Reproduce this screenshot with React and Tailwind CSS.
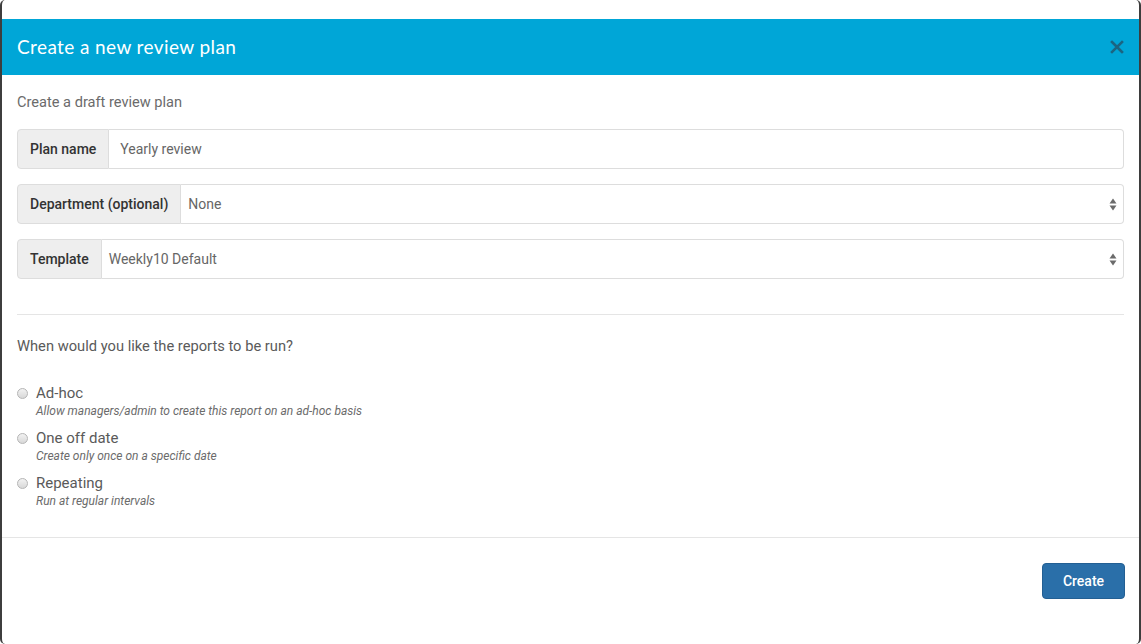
import { useState } from 'react';

const OPTIONS = [
  { value: 'adhoc', label: 'Ad-hoc', hint: 'Allow managers/admin to create this report on an ad-hoc basis' },
  { value: 'once', label: 'One off date', hint: 'Create only once on a specific date' },
  { value: 'repeat', label: 'Repeating', hint: 'Run at regular intervals' },
];

function SelectArrows() {
  return (
    <svg width="8" height="13" viewBox="0 0 8 13" className="shrink-0">
      <path d="M4 0.5 L7.5 5.5 H0.5 Z" fill="#6b6b6b" />
      <path d="M4 12.5 L7.5 7.5 H0.5 Z" fill="#6b6b6b" />
    </svg>
  );
}

function Field({ label, value, select }) {
  return (
    <div className="flex h-10">
      <div className="flex items-center px-[12px] bg-[#eeeeee] border border-[#dddddd] rounded-l-[4px] text-[14px] font-medium text-[#333] whitespace-nowrap">
        {label}
      </div>
      <div className={`flex-1 flex items-center justify-between pr-[6px] border border-l-0 border-[#dddddd] rounded-r-[4px] text-[14px] text-[#666] bg-white ${select ? 'pl-[7px]' : 'pl-[11px]'}`}>
        <span>{value}</span>
        {select && <SelectArrows />}
      </div>
    </div>
  );
}

export default function App() {
  const [run, setRun] = useState('');

  return (
    <div className="h-screen bg-white border-x-2 border-[#3d3d3d] rounded-[5px] overflow-hidden flex flex-col" style={{ fontFamily: 'Roboto, "Noto Sans", sans-serif' }}>
      <div className="h-[19px]" />
      <div className="h-[56px] bg-[#00a6d7] flex items-center justify-between pl-[15px] pr-[15px]">
        <h1 className="text-white text-[19px] tracking-[0.4px]" style={{ fontFamily: 'Lato, "Open Sans", sans-serif' }}>
          Create a new review plan
        </h1>
        <button className="text-[#1b6582]">
          <svg width="14" height="14" viewBox="0 0 14 14">
            <path d="M2 2 L12 12 M12 2 L2 12" stroke="currentColor" strokeWidth="2.6" strokeLinecap="square" />
          </svg>
        </button>
      </div>

      <div className="px-[15px] pt-[17px]">
        <p className="text-[14.6px] leading-[20px] text-[#6b6b6b] mb-[17px]">Create a draft review plan</p>
        <div className="flex flex-col gap-[15px]">
          <Field label="Plan name" value="Yearly review" />
          <Field label="Department (optional)" value="None" select />
          <Field label="Template" value="Weekly10 Default" select />
        </div>

        <div className="border-t border-[#e5e5e5] mt-[35px]" />

        <p className="text-[14.7px] leading-[20px] text-[#5a5a5a] mt-[21px]">When would you like the reports to be run?</p>

        <div className="mt-[27px] flex flex-col gap-[9px]">
          {OPTIONS.map((o) => (
            <label key={o.value} className="flex items-start gap-[8px] cursor-pointer" onClick={() => setRun(o.value)}>
              <span className="mt-[5px] w-[11px] h-[11px] rounded-full border border-[#b5b5b5] bg-gradient-to-b from-[#f2f2f2] to-[#d8d8d8] flex items-center justify-center shrink-0">
                {run === o.value && <span className="w-[5px] h-[5px] rounded-full bg-[#444]" />}
              </span>
              <span className="flex flex-col">
                <span className="text-[15px] text-[#5a5a5a] leading-[20px]">{o.label}</span>
                <span className="text-[12px] italic text-[#6b6b6b] leading-[16px]">{o.hint}</span>
              </span>
            </label>
          ))}
        </div>
      </div>

      <div className="border-t border-[#e5e5e5] mt-[28px]" />

      <div className="flex justify-end px-[14px] pt-[25px]">
        <button className="h-[36px] w-[83px] rounded-[4px] bg-[#2a6fa9] border border-[#235f93] text-white text-[14px] font-medium">
          Create
        </button>
      </div>
    </div>
  );
}
